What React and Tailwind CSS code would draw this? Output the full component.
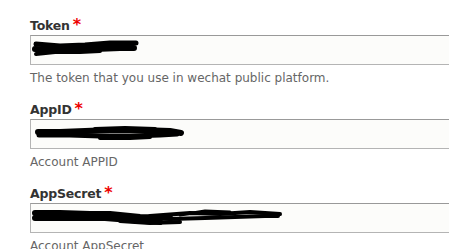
const fields = [
  {
    id: "token",
    label: "Token",
    help: "The token that you use in wechat public platform.",
    scribble: [
      { d: "M6 9 L30 11 L55 10 L80 8 L106 8", w: 5 },
      { d: "M5 14 L35 15 L65 14 L90 13 L104 13", w: 6 },
      { d: "M6 19 L25 17 L50 17 L70 16", w: 4 },
      { d: "M50 11 L75 12 L100 11", w: 4 },
    ],
  },
  {
    id: "appid",
    label: "AppID",
    help: "Account APPID",
    scribble: [
      { d: "M8 13 L30 13 L55 12 L80 11 L110 11 L140 12 L151 14", w: 6 },
      { d: "M9 16 L40 16 L70 17 L100 17 L130 16 L147 15", w: 5 },
      { d: "M65 10 L95 9 L125 10", w: 4 },
      { d: "M70 19 L100 19 L120 18", w: 4 },
    ],
  },
  {
    id: "appsecret",
    label: "AppSecret",
    help: "Account AppSecret",
    scribble: [
      { d: "M5 10 L30 10 L60 11 L80 11 L110 14 L140 15", w: 6 },
      { d: "M5 15 L40 15 L75 15 L100 17 L130 19", w: 6 },
      { d: "M120 13 L160 10 L190 11 L220 9 L250 11", w: 4 },
      { d: "M140 16 L175 15 L205 14 L235 13 L248 13", w: 4 },
      { d: "M90 18 L120 20 L150 19", w: 4 },
      { d: "M150 12 L175 8 L200 9", w: 3 },
    ],
  },
];

function Scribble({ strokes }) {
  return (
    <svg
      className="absolute left-0 top-0 pointer-events-none"
      width="300"
      height="30"
      viewBox="0 0 300 30"
    >
      {strokes.map((s, i) => (
        <path
          key={i}
          d={s.d}
          fill="none"
          stroke="#000"
          strokeWidth={s.w}
          strokeLinecap="round"
          strokeLinejoin="round"
        />
      ))}
    </svg>
  );
}

function FormItem({ field }) {
  return (
    <div className="mb-[13px]">
      <label
        htmlFor={field.id}
        className="flex h-[18px] items-baseline pt-[2px] text-[12.5px] leading-[16px] font-bold tracking-[-0.2px] text-[#333]"
      >
        {field.label}
        <span className="ml-[3px] text-[16px] leading-none text-[#e00]">*</span>
      </label>
      <div className="relative mt-[2px] w-[500px]">
        <input
          id={field.id}
          type="text"
          readOnly
          className="block h-[30px] w-full border border-[#b4b4b4] border-t-[#999] bg-[#fcfcfa] outline-none"
        />
        <Scribble strokes={field.scribble} />
      </div>
      <div className="mt-[5px] text-[12px] leading-[16px] text-[#666]">
        {field.help}
      </div>
    </div>
  );
}

export default function App() {
  return (
    <div
      className="w-screen h-[249px] overflow-hidden bg-white pl-[30px] pt-[15px]"
      style={{ fontFamily: '"DejaVu Sans", Verdana, sans-serif' }}
    >
      {fields.map((field) => (
        <FormItem key={field.id} field={field} />
      ))}
    </div>
  );
}
